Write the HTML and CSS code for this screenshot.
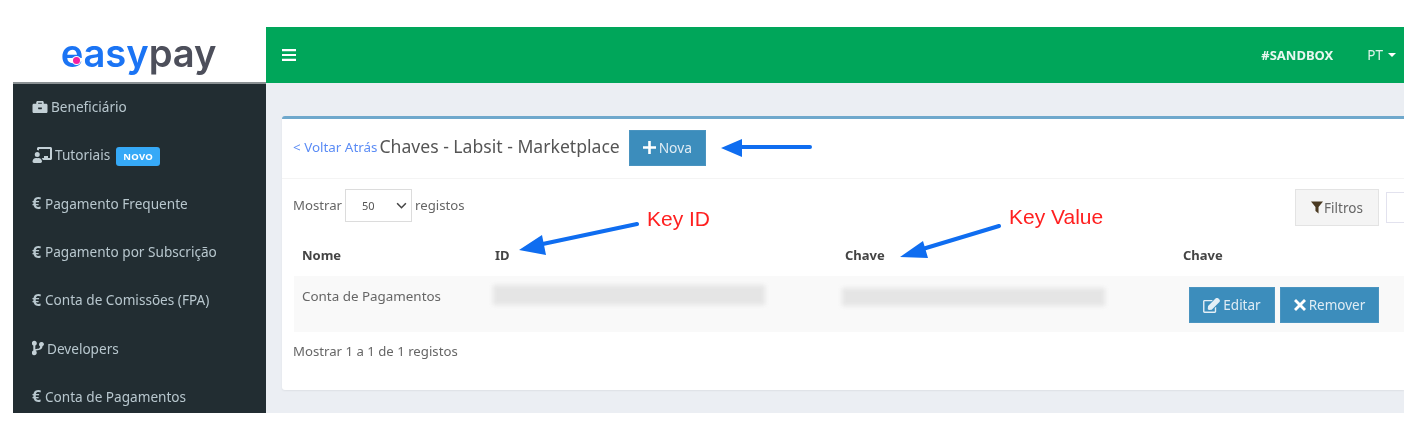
FILE: index.html
```html
<!DOCTYPE html>
<html lang="pt">
<head>
<meta charset="utf-8">
<title>Chaves - easypay</title>
<link rel="stylesheet" href="styles.css">
</head>
<body>
<div class="app">
  <aside class="sidebar">
    <div class="logo"><span class="logo-word"><span class="logo-easy">easy</span><span class="logo-pay">pay</span><i class="logo-dot"></i></span></div>
    <nav class="menu">
      <a class="item"><svg class="ico" viewBox="0 0 512 512"><path d="M320 336c0 9-7 16-16 16h-96c-9 0-16-7-16-16v-48H0v144c0 26 22 48 48 48h416c26 0 48-22 48-48V288H320v48zM464 160h-80V112c0-26-22-48-48-48H176c-26 0-48 22-48 48v48H48c-26 0-48 22-48 48v80h512v-80c0-26-22-48-48-48zm-144 0H192v-32h128v32z"/></svg>Beneficiário</a>
      <a class="item"><svg class="ico ico-wide" viewBox="0 0 640 512"><path d="M208 352c-2 0-5 0-7 1-10 3-21 5-33 5s-23-2-33-5c-2-1-5-1-7-1-62 0-112 50-112 113 0 26 22 47 48 47h208c26 0 48-21 48-47 0-63-50-113-112-113zm-40-32a80 80 0 1 0 0-160 80 80 0 0 0 0 160zM592 0H208c-26 0-48 22-48 49v47c23 0 45 7 64 18V64h352v288h-64v-64H384v64h-76c19 17 33 38 39 64h245c26 0 48-22 48-49V49c0-27-22-49-48-49z"/></svg>Tutoriais<span class="badge">NOVO</span></a>
      <a class="item"><span class="euro">€</span>Pagamento Frequente</a>
      <a class="item"><span class="euro">€</span>Pagamento por Subscrição</a>
      <a class="item"><span class="euro">€</span>Conta de Comissões (FPA)</a>
      <a class="item"><svg class="ico ico-branch" viewBox="0 0 384 512"><path d="M384 144a80 80 0 1 0-124 67c-2 24-10 38-26 50-14 11-37 17-90 24-12 2-25 4-38 7V179a80 80 0 1 0-64 0v154a80 80 0 1 0 72 6c13-5 34-8 61-11 56-8 89-17 116-38 29-23 42-56 45-94a80 80 0 0 0 48-52z"/></svg>Developers</a>
      <a class="item"><span class="euro">€</span>Conta de Pagamentos</a>
    </nav>
  </aside>
  <div class="main">
    <header class="topbar">
      <svg class="bars" viewBox="0 0 14 12"><path d="M0 0h14v2.200H0zM0 4.900h14v2.200H0zM0 9.800h14V12H0z"/></svg>
      <span class="env">#SANDBOX</span>
      <span class="lang">PT<i class="caret"></i></span>
    </header>
    <section class="content">
      <div class="card">
        <div class="card-head">
          <a class="back">&lt; Voltar Atrás</a>
          <h1 class="title">Chaves - Labsit - Marketplace</h1>
          <button class="btn btn-new"><svg class="plus" viewBox="0 0 14 14"><path d="M5.600 0h2.800v5.600H14v2.800H8.400V14H5.600V8.400H0V5.600h5.600z"/></svg>Nova</button>
        </div>
        <div class="card-body">
          <div class="tools">
            <div class="length">Mostrar
              <span class="select">50<svg class="chev" viewBox="0 0 12 8"><path d="M1 1.500l5 5 5-5" fill="none" stroke="#444" stroke-width="1.800"/></svg></span>
              registos</div>
            <div class="tools-right">
              <button class="btn-filter"><svg class="funnel" viewBox="0 0 14 14"><path d="M0 0h14L8.800 6.500V14L5.200 11V6.500z"/></svg>Filtros</button>
              <span class="search"></span>
            </div>
          </div>
          <table class="grid">
            <colgroup><col class="c1"><col class="c2"><col class="c3"><col class="c4"></colgroup>
            <thead><tr><th>Nome</th><th>ID</th><th>Chave</th><th>Chave</th></tr></thead>
            <tbody>
              <tr>
                <td class="name">Conta de Pagamentos</td>
                <td><span class="mask mask-id"></span></td>
                <td><span class="mask mask-key"></span></td>
                <td class="actions">
                  <div class="action-row">
                    <button class="btn btn-edit"><svg class="ic-btn" viewBox="0 0 576 512"><path d="M402 339l32-32c5-5 14-2 14 6v151c0 26-22 48-48 48H48c-26 0-48-22-48-48V112c0-26 22-48 48-48h273c7 0 11 9 6 14l-32 32c-2 2-4 2-6 2H48v352h352V345c0-2 1-4 2-6zm156-202L296 399l-90 10c-26 3-48-19-45-45l10-90L433 12c23-23 60-23 83 0l42 42c23 23 23 60 0 83z"/></svg>Editar</button>
                    <button class="btn btn-del"><svg class="ic-x" viewBox="0 0 12 12"><path d="M2 0l4 4 4-4 2 2-4 4 4 4-2 2-4-4-4 4-2-2 4-4-4-4z"/></svg>Remover</button>
                  </div>
                </td>
              </tr>
            </tbody>
          </table>
          <p class="info">Mostrar 1 a 1 de 1 registos</p>
        </div>
      </div>
    </section>
  </div>
</div>
<svg class="notes" viewBox="0 0 1425 438">
  <path class="note-line" d="M810 147H736M637 224L538 245M999 226L916 251"/>
  <path class="note-head" d="M721 148L742 139V157zM519 250L542 235L546 255zM900 257L923 241L928 258z"/>
  <text class="note-text" x="647" y="226">Key ID</text>
  <text class="note-text" x="1009" y="224">Key Value</text>
</svg>
</body>
</html>
```
FILE: styles.css
```css
* { box-sizing: border-box; }
html, body { margin: 0; padding: 0; background: #fff; }
body { width: 1425px; height: 438px; overflow: hidden; position: relative; font-family: "Noto Sans", sans-serif; font-size: 13px; color: #666; }

.app { display: grid; grid-template-columns: 253px 1138px; height: 386px; margin: 27px 0 0 13px; width: 1391px; overflow: hidden; filter: blur(0.5px); }

.sidebar { display: flex; flex-direction: column; background: #222d32; overflow: hidden; }
.logo { height: 57px; flex: none; background: #fff; border-bottom: 2px solid #8b9194; display: flex; justify-content: center; align-items: center; padding-right: 2px; }
.logo-word { position: relative; font-family: "Inter", sans-serif; font-weight: 600; font-size: 38.2px; letter-spacing: -0.1px; line-height: 40px; margin-top: -4px; }
.logo-easy { color: #1b74f4; }
.logo-pay { color: #4d4f5b; }
.logo-dot { position: absolute; left: 12px; top: 24px; width: 7px; height: 7px; border-radius: 50%; background: #f321a0; box-shadow: 0 0 0 1px #fff; }

.menu { display: flex; flex-direction: column; }
.item { display: flex; align-items: center; height: 48.3px; flex: none; padding: 0 0 3px 19px; color: #b8c7ce; font-size: 13.6px; white-space: nowrap; }
.ico { width: 16px; height: 15px; fill: #c3d0d6; margin-right: 3px; flex: none; }
.ico-wide { width: 20px; height: 16px; margin-right: 3px; }
.ico-branch { width: 12px; height: 16px; margin-right: 3px; }
.euro { font-weight: 700; font-size: 16px; width: 13px; flex: none; }
.badge { margin-left: 6px; background: #36a9f7; color: #fff; font-size: 9.5px; font-weight: 700; width: 44px; text-align: center; line-height: 19px; height: 19px; border-radius: 3px; letter-spacing: 0.3px; margin-top: 3px; }

.main { display: flex; flex-direction: column; min-width: 0; background: #ebeef3; }
.topbar { height: 56px; flex: none; background: #00a65a; color: #fff; display: flex; align-items: center; padding: 0 8px 0 16px; }
.bars { width: 14px; height: 12px; fill: #fff; }
.env { margin-left: auto; font-weight: 700; font-size: 13px; color: #e8f7f0; }
.lang { margin-left: 34px; font-size: 13.5px; color: #dff3ea; display: flex; align-items: center; }
.caret { margin-left: 5px; border-left: 4px solid transparent; border-right: 4px solid transparent; border-top: 4px solid #fff; }

.content { flex: 1; padding: 33px 0 0 16px; min-height: 0; }
.card { height: 274px; background: #fff; border-top: 3px solid #6fa8cc; border-radius: 3px 0 0 3px; box-shadow: 0 1px 2px rgba(0,0,0,.06); }
.card-head { height: 60px; display: flex; align-items: center; padding: 0 0 3px 11px; border-bottom: 1px solid #f4f4f4; }
.back { color: #5b8cf5; font-size: 13.4px; margin-right: 2px; }
.title { margin: -2px 0 0; font-weight: 400; font-size: 17.6px; color: #555; white-space: nowrap; }
.btn { border: 1px solid #4a94c0; background: #3c8dbc; color: #dfecf4; font: inherit; display: inline-flex; align-items: center; justify-content: center; height: 36px; padding: 0; border-radius: 0; }
.btn-new { width: 77px; margin: 1px 0 0 9px; font-size: 13.8px; }
.plus { width: 13px; height: 13px; fill: #fff; margin-right: 3px; }

.card-body { padding: 10px 0 0 12px; }
.tools { display: flex; align-items: flex-start; height: 51px; }
.length { display: flex; align-items: center; gap: 3px; height: 31px; font-size: 13.2px; margin-left: -1px; }
.select { width: 67px; height: 33px; flex: none; border: 1px solid #dcdcdc; display: flex; align-items: center; justify-content: space-between; padding: 0 3px 0 16px; font-size: 11px; color: #555; margin-top: 2px; }
.chev { width: 11px; height: 7px; margin-right: 1px; }
.tools-right { margin-left: auto; display: flex; align-items: flex-start; gap: 7px; }
.btn-filter { width: 84px; height: 37px; background: #f4f4f4; border: 1px solid #e3e3e3; color: #666; font: inherit; font-size: 13.5px; display: flex; align-items: center; justify-content: center; padding: 0; }
.funnel { width: 12px; height: 13px; fill: #4a3a22; margin-right: 1px; }
.search { width: 18px; height: 31px; margin-top: 3px; background: #fff; border: 1px solid #e2e2ee; border-right: 0; }

.grid { border-collapse: collapse; table-layout: fixed; width: 1110px; }
.c1 { width: 193px; }
.c2 { width: 350px; }
.c3 { width: 338px; }
.c4 { width: 229px; }
th { height: 36px; text-align: left; padding: 0 8px 6px; font-size: 13px; font-weight: 700; color: #444; }
td { height: 56px; background: #f9f9f9; padding: 0 8px; vertical-align: top; font-size: 13.4px; }
.name { padding-top: 11px; }
.mask { display: block; height: 20px; margin-left: -2px; background: #e5e5e5; filter: blur(2px); }
.mask-id { width: 272px; margin-top: 9px; }
.mask-key { width: 263px; margin-top: 12px; height: 18px; margin-left: -3px; }
.actions { padding: 11px 0 0 14px; }
.action-row { display: flex; gap: 5px; }
.btn-edit { width: 86px; font-size: 13.5px; }
.btn-del { width: 99px; font-size: 13.5px; }
.ic-btn { width: 17px; height: 15px; fill: #e4eff6; margin-right: 3px; }
.ic-x { width: 12px; height: 12px; fill: #fff; margin-right: 3px; }
.info { margin: 10px 0 0 -1px; font-size: 13.2px; line-height: 18px; }

.notes { position: absolute; left: 0; top: 0; width: 1425px; height: 438px; pointer-events: none; filter: blur(0.4px); }
.note-line { fill: none; stroke: #0f6df0; stroke-width: 4; stroke-linecap: round; }
.note-head { fill: #0f6df0; }
.note-text { fill: #ff2020; font-family: "Liberation Sans", sans-serif; font-size: 21px; }
```
